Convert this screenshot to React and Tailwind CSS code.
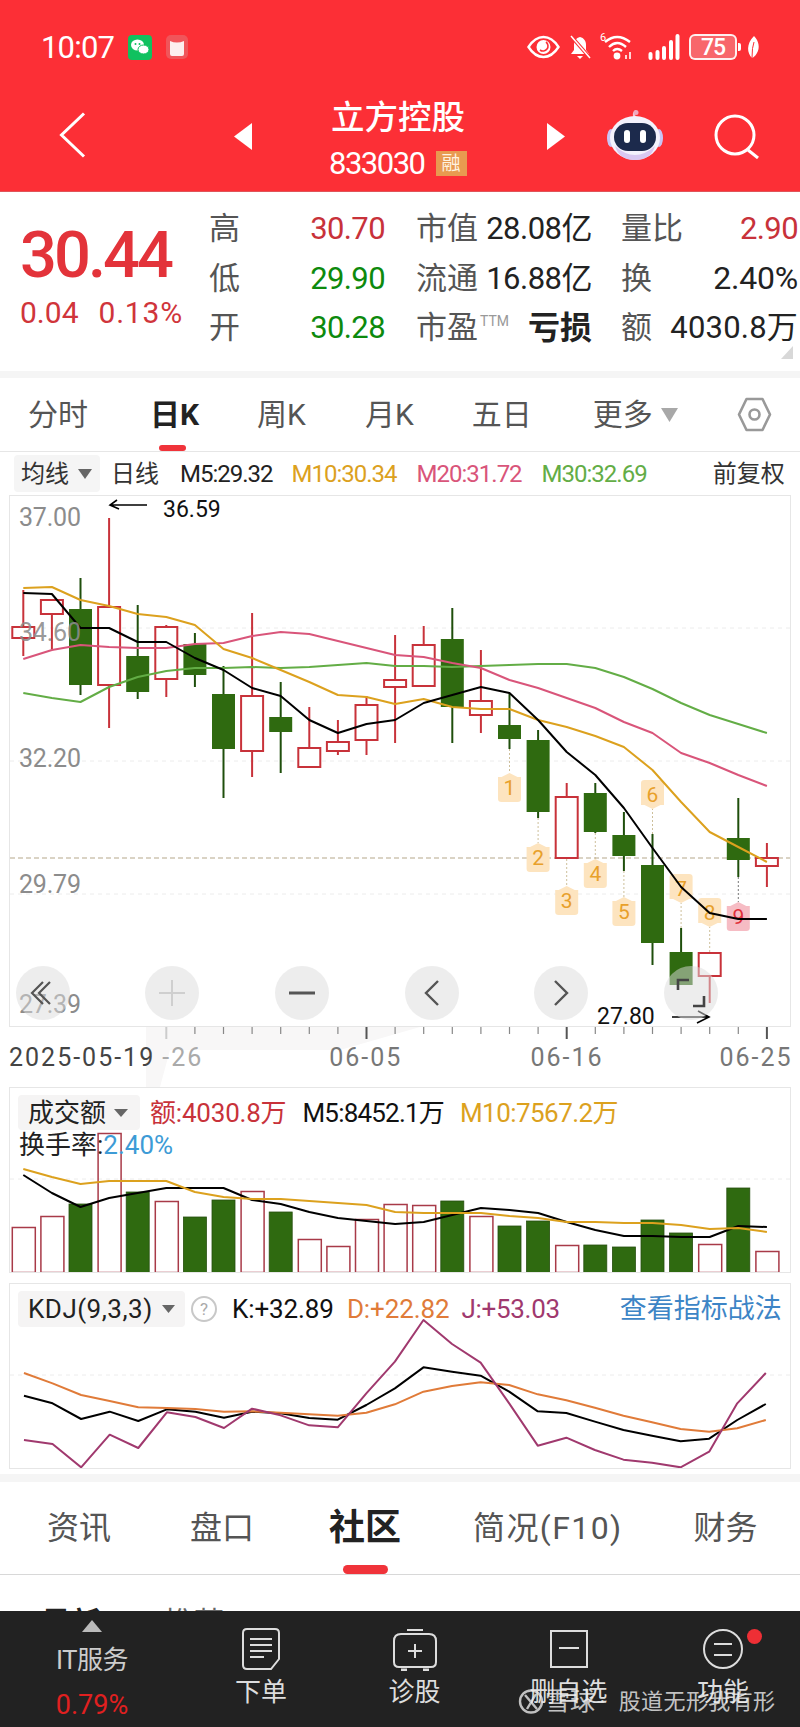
const RED = "#c8323a";
const GREEN = "#2f6a10";
const WICK_G = "#1f4f0c";

const xAt = (i) => 23.3 + 28.6 * i;
const pts = (ys) => ys.map((y, i) => `${xAt(i)},${y}`).join(" ");

// type, wickTop, bodyTop, bodyBottom, wickBottom
const candles = [
  ["r", 590, 626, 639, 656],
  ["r", 599, 599, 615, 649],
  ["g", 578, 609, 685, 695],
  ["r", 518, 606, 686, 728],
  ["g", 605, 656, 692, 699],
  ["r", 625, 626, 680, 697],
  ["g", 633, 644, 675, 687],
  ["g", 666, 694, 749, 798],
  ["r", 613, 695, 752, 777],
  ["g", 682, 717, 732, 773],
  ["r", 707, 747, 768, 768],
  ["r", 720, 741, 752, 755],
  ["r", 696, 704, 741, 755],
  ["r", 635, 679, 688, 743],
  ["r", 626, 644, 687, 687],
  ["g", 608, 639, 707, 743],
  ["r", 650, 700, 716, 733],
  ["g", 693, 725, 739, 749],
  ["g", 730, 740, 812, 818],
  ["r", 783, 796, 859, 859],
  ["g", 783, 793, 832, 833],
  ["g", 812, 835, 856, 871],
  ["g", 834, 865, 943, 965],
  ["g", 928, 952, 985, 985],
  ["r", 952, 952, 977, 1003],
  ["g", 798, 838, 860, 877],
  ["r", 843, 857, 867, 887],
];

const ma5 = [593, 594, 628, 628, 642, 642, 658, 670, 688, 696, 720, 733, 724, 720, 703, 695, 687, 693, 720, 752, 775, 808, 848, 887, 913, 919, 919];
const ma10 = [588, 587, 600, 606, 614, 617, 625, 649, 658, 670, 682, 695, 697, 704, 699, 707, 709, 709, 720, 727, 736, 747, 770, 802, 832, 847, 862];
const ma20 = [659, 650, 645, 647, 648, 648, 644, 643, 636, 632, 634, 641, 648, 655, 657, 663, 668, 680, 688, 698, 708, 722, 733, 753, 763, 775, 786];
const ma30 = [693, 698, 702, 687, 677, 671, 668, 668, 667, 668, 667, 665, 663, 666, 666, 667, 666, 665, 664, 664, 668, 677, 689, 703, 715, 724, 733];

const badges = [
  { n: 1, i: 17, top: 773, up: true, from: 749 },
  { n: 2, i: 18, top: 843, up: true, from: 818 },
  { n: 3, i: 19, top: 886, up: true, from: 859 },
  { n: 4, i: 20, top: 859, up: true, from: 833 },
  { n: 5, i: 21, top: 897, up: true, from: 871 },
  { n: 6, i: 22, top: 780, up: false, from: 834 },
  { n: 7, i: 23, top: 874, up: false, from: 928 },
  { n: 8, i: 24, top: 898, up: false, from: 952 },
  { n: 9, i: 25, top: 902, up: true, from: 877, pink: true },
];

const vols = [
  ["r", 1227], ["r", 1216], ["g", 1204], ["r", 1133], ["g", 1192], ["r", 1201], ["g", 1217], ["g", 1200], ["r", 1191],
  ["g", 1212], ["r", 1239], ["r", 1246], ["r", 1219], ["r", 1204], ["r", 1205], ["g", 1201], ["r", 1216], ["g", 1226],
  ["g", 1221], ["r", 1245], ["g", 1245], ["g", 1247], ["g", 1220], ["g", 1233], ["r", 1244], ["g", 1188], ["r", 1251],
];
const volM5 = [1175, 1193, 1207, 1198, 1193, 1188, 1188, 1188, 1200, 1204, 1212, 1218, 1221, 1224, 1222, 1215, 1208, 1210, 1213, 1222, 1230, 1236, 1236, 1237, 1237, 1226, 1227];
const volM10 = [1169, 1177, 1184, 1181, 1181, 1181, 1192, 1197, 1199, 1199, 1201, 1203, 1205, 1212, 1213, 1213, 1213, 1216, 1218, 1222, 1222, 1223, 1223, 1225, 1229, 1228, 1232];

// kdj read from the crop: x in 1.96 scale, y in 3x
const kdjX = [47, 103, 159, 215, 271, 327, 383, 439, 494, 550, 606, 662, 718, 774, 830, 886, 942, 998, 1054, 1110, 1166, 1222, 1278, 1334, 1390, 1445, 1501];
const kLine = [377, 400, 447, 425, 453, 418, 425, 443, 425, 430, 444, 449, 405, 355, 292, 305, 317, 365, 424, 429, 455, 480, 497, 514, 506, 450, 402];
const dLine = [309, 340, 375, 393, 412, 414, 417, 425, 424, 428, 433, 437, 428, 403, 365, 348, 337, 345, 373, 391, 413, 437, 457, 477, 485, 475, 450];
const jLine = [510, 522, 592, 494, 534, 427, 441, 474, 416, 436, 466, 472, 370, 275, 150, 222, 278, 400, 527, 503, 540, 569, 578, 592, 545, 400, 309];
const kdjPts = (ys) => ys.map((y, i) => `${kdjX[i] / 1.96},${1270 + y / 3}`).join(" ");

const Line = ({ points, color, w = 2 }) => (
  <polyline points={points} fill="none" stroke={color} strokeWidth={w} strokeLinejoin="round" />
);

const StatusIcons = () => (
  <>
    <svg className="ml-[11px] w-[24px] h-[25px]" viewBox="0 0 24 25">
      <rect width="24" height="25" rx="4" fill="#10c15f" />
      <ellipse cx="9.5" cy="10" rx="6.5" ry="5.5" fill="#fff" />
      <ellipse cx="15.5" cy="14.5" rx="5.5" ry="4.5" fill="#fff" stroke="#10c15f" />
      <circle cx="7.5" cy="9" r="1" fill="#10c15f" />
      <circle cx="11.5" cy="9" r="1" fill="#10c15f" />
    </svg>
    <svg className="ml-[14px] w-[22px] h-[24px]" viewBox="0 0 22 24">
      <rect width="22" height="24" rx="5" fill="#f0555a" />
      <path d="M4 6Q11 9 18 6V19Q18 21 16 21H6Q4 21 4 19Z" fill="#fdeeee" />
    </svg>
    <svg className="ml-[339px] w-[33px] h-[24px]" viewBox="0 0 33 24">
      <path d="M1.5 12C6 5 11 2 16.5 2S27 5 31.5 12C27 19 22 22 16.5 22S6 19 1.5 12Z" fill="none" stroke="#fff" strokeWidth="2.4" />
      <circle cx="16.5" cy="12" r="7" fill="#fff" />
      <path d="M13 15A5 5 0 0 0 19 7" fill="none" stroke="#fc2f36" strokeWidth="1.6" />
    </svg>
    <svg className="ml-[9px] w-[23px] h-[24px]" viewBox="0 0 23 24">
      <path d="M11 2C7 3 5 6 5 10V15L2 19H20L17 15V10C17 6 15 3 11 2Z" fill="#fff" />
      <path d="M8 21H14L11 24Z" fill="#fff" />
      <path d="M2 1L21 23" stroke="#fc2f36" strokeWidth="3.5" />
      <path d="M2 1L21 23" stroke="#fff" strokeWidth="1.5" />
    </svg>
    <div className="relative ml-[8px] w-[35px] h-[26px]">
      <span className="absolute left-0 -top-[2px] text-[11px] leading-none text-white">6</span>
      <svg className="absolute inset-0 w-[35px] h-[26px]" viewBox="0 0 35 26">
        <path d="M5 8Q17 -2 30 8" fill="none" stroke="#fff" strokeWidth="2.4" />
        <path d="M9 13Q17 5 26 13" fill="none" stroke="#fff" strokeWidth="2.4" />
        <path d="M13 17Q17 13 22 17" fill="none" stroke="#fff" strokeWidth="2.4" />
        <circle cx="17" cy="22" r="3.4" fill="#fff" />
        <path d="M26 25V21M30 25V18" stroke="#fff" strokeWidth="1.6" />
      </svg>
    </div>
    <svg className="ml-[13px] w-[32px] h-[26px]" viewBox="0 0 32 26" stroke="#fff" strokeWidth="4" strokeLinecap="round">
      <path d="M2.5 20V24M9.5 18V24M16 14V24M23 8V24M29.5 2V24" />
    </svg>
    <div className="ml-[9px] w-[48px] h-[26px] rounded-[6px] border-2 border-white/90 bg-[#f8666b] flex items-center justify-center text-[23px] leading-none text-white font-medium tracking-[-1px]">
      75
    </div>
    <div className="ml-[1px] w-[3px] h-[8px] bg-white rounded-r-[2px]" />
    <svg className="ml-[5px] w-[14px] h-[24px]" viewBox="0 0 14 24">
      <path d="M8 1C13 6 14 13 11 18C9 22 6 23 6 23C1 18 0 9 8 1Z" fill="#fff" />
      <path d="M6 23Q6 12 8 7" stroke="#fc2f36" fill="none" strokeWidth="1" />
    </svg>
  </>
);

const Robot = () => (
  <svg className="ml-[42px] mt-[16px] w-[56px] h-[50px]" viewBox="0 0 56 50">
    <path d="M28 10C27 5 26 3 29 1" fill="none" stroke="#f3c3d2" strokeWidth="2.4" />
    <circle cx="29" cy="2.5" r="2.5" fill="#f0a8bf" />
    <ellipse cx="4" cy="28" rx="4" ry="9" fill="#c9c4f4" />
    <ellipse cx="52" cy="28" rx="4" ry="9" fill="#c9c4f4" />
    <ellipse cx="28" cy="28" rx="25" ry="22" fill="#f4f2fd" />
    <path d="M8 36Q28 54 48 36Q44 50 28 50Q12 50 8 36Z" fill="#d9c8f2" />
    <rect x="7" y="13" width="42" height="28" rx="14" fill="#1c2a4c" />
    <rect x="17" y="20" width="6" height="13" rx="3" fill="#fff" />
    <rect x="33" y="20" width="6" height="13" rx="3" fill="#fff" />
  </svg>
);

const Cell = ({ label, children }) => (
  <div className="flex items-center justify-between h-[49.5px]">
    <span className="text-[31px] leading-none text-[#555]">{label}</span>
    {children}
  </div>
);

const Quote = () => (
  <div className="h-[179px] flex bg-white pt-[12px] relative">
    <div className="w-[209px] pl-[20px] shrink-0">
      <div className="mt-[19px] text-[65px] leading-none font-medium text-[#e3333a] tracking-[-3px]">30.44</div>
      <div className="mt-[10px] flex text-[30px] leading-none text-[#d0353b]">
        <span>0.04</span>
        <span className="ml-[20px] tracking-[0.8px]">0.13%</span>
      </div>
    </div>
    <div className="w-[176px] shrink-0">
      <Cell label="高"><span className="text-[31px] leading-none text-[#c8323a] tracking-[-0.6px]">30.70</span></Cell>
      <Cell label="低"><span className="text-[31px] leading-none text-[#0d8a0d] tracking-[-0.6px]">29.90</span></Cell>
      <Cell label="开"><span className="text-[31px] leading-none text-[#0d8a0d] tracking-[-0.6px]">30.28</span></Cell>
    </div>
    <div className="w-[176px] shrink-0 ml-[31px]">
      <Cell label="市值"><span className="text-[31px] leading-none text-[#222] tracking-[-0.5px]">28.08亿</span></Cell>
      <Cell label="流通"><span className="text-[31px] leading-none text-[#222] tracking-[-0.5px]">16.88亿</span></Cell>
      <div className="flex items-center h-[49.5px]">
        <span className="text-[31px] leading-none text-[#555]">市盈</span>
        <span className="ml-[2px] -mt-[14px] text-[14px] leading-none text-[#999]">TTM</span>
        <span className="ml-auto text-[32px] leading-none font-bold text-[#222]">亏损</span>
      </div>
    </div>
    <div className="w-[177px] shrink-0 ml-[29px]">
      <Cell label="量比"><span className="text-[31px] leading-none text-[#c8323a] tracking-[-0.6px]">2.90</span></Cell>
      <Cell label="换"><span className="text-[32px] leading-none text-[#222] tracking-[-0.2px]">2.40%</span></Cell>
      <Cell label="额"><span className="text-[31px] leading-none text-[#222] tracking-[0.2px]">4030.8万</span></Cell>
    </div>
    <svg className="absolute right-[7px] bottom-[12px] w-[12px] h-[13px]" viewBox="0 0 12 13">
      <path d="M12 0V13H0Z" fill="#d8d8d8" />
    </svg>
  </div>
);

const PeriodTabs = () => (
  <div className="relative h-[74px] bg-white border-b border-[#e6e6e6] flex items-center text-[#555]">
    <span className="ml-[28px] text-[30px] leading-none">分时</span>
    <span className="ml-[62px] text-[30px] leading-none font-bold text-[#222]">日K</span>
    <span className="ml-[58px] text-[30px] leading-none">周K</span>
    <span className="ml-[59px] text-[30px] leading-none">月K</span>
    <span className="ml-[58px] text-[30px] leading-none">五日</span>
    <span className="ml-[61px] text-[30px] leading-none">更多</span>
    <svg className="ml-[8px] w-[17px] h-[14px]" viewBox="0 0 17 14">
      <path d="M0 0H17L8.5 14Z" fill="#a8a8a8" />
    </svg>
    <svg className="ml-[59px] w-[35px] h-[35px]" viewBox="0 0 35 35" fill="none" stroke="#999" strokeWidth="2.6">
      <path d="M9.5 2H25.5L33 17.5L25.5 33H9.5L2 17.5Z" strokeLinejoin="round" />
      <circle cx="17.5" cy="17.5" r="5" />
    </svg>
    <div className="absolute left-[159px] bottom-0 w-[27px] h-[6px] rounded-full bg-[#f0333a]" />
  </div>
);

const MaRow = () => (
  <div className="h-[43px] bg-white flex items-center text-[24px] leading-none">
    <div className="ml-[14px] w-[86px] h-[37px] rounded-[4px] bg-[#f5f5f5] flex items-center">
      <span className="ml-[7px] text-[#333]">均线</span>
      <svg className="ml-[9px] w-[14px] h-[10px]" viewBox="0 0 14 10">
        <path d="M0 0H14L7 10Z" fill="#666" />
      </svg>
    </div>
    <span className="ml-[11px] text-[#333]">日线</span>
    <span className="ml-[21px] text-[#222] tracking-[-1px]">M5:29.32</span>
    <span className="ml-[19px] text-[#dca11e] tracking-[-1px]">M10:30.34</span>
    <span className="ml-[20px] text-[#d9557a] tracking-[-1px]">M20:31.72</span>
    <span className="ml-[20px] text-[#63ad46] tracking-[-1px]">M30:32.69</span>
    <span className="ml-[66px] text-[#333]">前复权</span>
  </div>
);

const Axis = ({ top, children, cls = "text-[#8c8c8c]" }) => (
  <span className={`absolute left-[9px] text-[25px] leading-none tracking-[-0.2px] ${cls}`} style={{ top: top - 496 - 12 }}>
    {children}
  </span>
);

const RoundBtn = ({ x, children }) => (
  <div
    className="absolute top-[470px] w-[54px] h-[54px] rounded-full bg-[#dcdcdc]/50 flex items-center justify-center"
    style={{ left: x - 27 - 10 }}
  >
    {children}
  </div>
);

const PriceChart = () => (
  <div className="relative mx-[9px] h-[532px] border border-[#e6e6e6] bg-white">
    <svg className="block w-full h-full" viewBox="10 496 780 530">
      <path d="M10 628H790M10 761H790M10 894H790" stroke="#ececec" strokeWidth="1" strokeDasharray="4 4" />
      <path d="M10 858H790" stroke="#b5a78a" strokeWidth="1" strokeDasharray="5 3" />
      {candles.map(([t, wt, bt, bb, wb], i) => {
        const x = xAt(i);
        return t === "r" ? (
          <g key={i}>
            <path d={`M${x} ${wt}V${wb}`} stroke={RED} strokeWidth="2" />
            <rect x={x - 11} y={bt + 1} width="22" height={bb - bt - 2} fill="#fff" stroke={RED} strokeWidth="2" />
          </g>
        ) : (
          <g key={i}>
            <path d={`M${x} ${wt}V${wb}`} stroke={WICK_G} strokeWidth="2" />
            <rect x={x - 11.5} y={bt} width="23" height={bb - bt} fill={GREEN} />
          </g>
        );
      })}
      {badges.map((b) => {
        const x = xAt(b.i);
        const h = 29;
        const end = b.up ? b.top : b.top + h;
        const shape = b.up
          ? `M${x} ${b.top}L${x + 8} ${b.top + 4}H${x + 11.5}V${b.top + h - 3}Q${x + 11.5} ${b.top + h} ${x + 8} ${b.top + h}H${x - 8}Q${x - 11.5} ${b.top + h} ${x - 11.5} ${b.top + h - 3}V${b.top + 4}H${x - 8}Z`
          : `M${x} ${b.top + h}L${x + 8} ${b.top + h - 4}H${x + 11.5}V${b.top + 3}Q${x + 11.5} ${b.top} ${x + 8} ${b.top}H${x - 8}Q${x - 11.5} ${b.top} ${x - 11.5} ${b.top + 3}V${b.top + h - 4}H${x - 8}Z`;
        return (
          <g key={b.n}>
            <path d={`M${x} ${b.from}V${end}`} stroke={b.pink ? "#777" : "#cdbf9a"} strokeWidth="1" strokeDasharray="2 2" />
            <path d={shape} fill={b.pink ? "#f6bcc4" : "#fde4bf"} />
            <text x={x} y={b.top + 22} textAnchor="middle" fontSize="21" fill={b.pink ? "#e0303a" : "#e8a02a"}>
              {b.n}
            </text>
          </g>
        );
      })}
      <Line points={pts(ma30)} color="#63ad46" />
      <Line points={pts(ma20)} color="#d9557a" />
      <Line points={pts(ma10)} color="#dca11e" />
      <Line points={pts(ma5)} color="#000" />
      <path d="M147 505H110M117 500L110 505L119 509" fill="none" stroke="#000" strokeWidth="1.6" />
      <path d="M672 1017H709M698 1011L709 1017L697 1023" fill="none" stroke="#000" strokeWidth="1.6" />
    </svg>
    <Axis top={517}>37.00</Axis>
    <Axis top={632} cls="text-[#8c8c8c]/90">34.60</Axis>
    <Axis top={758}>32.20</Axis>
    <Axis top={884}>29.79</Axis>
    <Axis top={1004}>27.39</Axis>
    <span className="absolute left-[153px] top-[2px] text-[23px] leading-none text-[#111]">36.59</span>
    <span className="absolute left-[587px] top-[509px] text-[23px] leading-none text-[#111]">27.80</span>
    <RoundBtn x={43}>
      <svg className="w-[28px] h-[28px]" viewBox="0 0 28 28" fill="none" stroke="#555" strokeWidth="2.2">
        <path d="M14 3L3 14L14 25M21 3L10 14L21 25" />
      </svg>
    </RoundBtn>
    <RoundBtn x={172}>
      <svg className="w-[26px] h-[26px]" viewBox="0 0 26 26" stroke="#cfcfcf" strokeWidth="2">
        <path d="M0 13H26M13 0V26" />
      </svg>
    </RoundBtn>
    <RoundBtn x={302}>
      <svg className="w-[26px] h-[4px]" viewBox="0 0 26 4">
        <path d="M0 2H26" stroke="#555" strokeWidth="3" />
      </svg>
    </RoundBtn>
    <RoundBtn x={432}>
      <svg className="w-[16px] h-[28px]" viewBox="0 0 16 28" fill="none" stroke="#555" strokeWidth="2.4">
        <path d="M14 2L2 14L14 26" />
      </svg>
    </RoundBtn>
    <RoundBtn x={561}>
      <svg className="w-[16px] h-[28px]" viewBox="0 0 16 28" fill="none" stroke="#555" strokeWidth="2.4">
        <path d="M2 2L14 14L2 26" />
      </svg>
    </RoundBtn>
    <RoundBtn x={691}>
      <svg className="w-[30px] h-[30px]" viewBox="0 0 30 30" fill="none" stroke="#444" strokeWidth="2.6">
        <path d="M13 2H2V12M17 28H28V18" />
      </svg>
    </RoundBtn>
  </div>
);

const DateAxis = () => (
  <div className="relative h-[60px] bg-white flex items-end pb-[17px] text-[25px] leading-none tracking-[2px]">
    <svg className="absolute inset-0 w-full h-full" viewBox="0 1027 800 60">
      <path d="M146 1027H420L340 1050H170L160 1087H146Z" fill="#f8f7f7" />
      {candles.map((_, i) => {
        if (i < 5) return null;
        const major = i === 5 || i === 12 || i === 19 || i === 26;
        const x = xAt(i);
        return (
          <path
            key={i}
            d={`M${x} 1027V${major ? 1039 : 1034}`}
            stroke={i === 5 ? "#ccc" : major ? "#555" : "#888"}
            strokeWidth={major ? 2 : 1.2}
          />
        );
      })}
    </svg>
    <span className="relative ml-[9px] text-[#444]">2025-05-19</span>
    <span className="relative ml-[7px] text-[#aaa]">-26</span>
    <span className="relative ml-[126px] text-[#777]">06-05</span>
    <span className="relative ml-[128px] text-[#777]">06-16</span>
    <span className="relative ml-[116px] text-[#777]">06-25</span>
  </div>
);

const VolumeChart = () => (
  <div className="relative mx-[9px] h-[186px] border border-[#e6e6e6] bg-white">
    <svg className="block w-full h-full" viewBox="10 1088 780 184">
      <path d="M10 1179H790" stroke="#ececec" strokeWidth="1" strokeDasharray="4 4" />
      {vols.map(([t, top], i) => {
        const x = xAt(i);
        return t === "r" ? (
          <rect key={i} x={x - 11} y={top + 0.5} width="23" height={1272 - top} fill="none" stroke="#a83a48" strokeWidth="1.5" />
        ) : (
          <rect key={i} x={x - 11.5} y={top} width="23" height={1273 - top} fill={GREEN} stroke="#274f10" strokeWidth="0.8" />
        );
      })}
      <Line points={pts(volM5)} color="#000" />
      <Line points={pts(volM10)} color="#dca11e" />
    </svg>
    <div className="absolute left-[8px] top-[7px] flex items-center text-[26px] leading-none">
      <div className="w-[122px] h-[35px] rounded-[4px] bg-[#f5f4f4] flex items-center pl-[10px]">
        <span className="text-[#222] text-[26px]">成交额</span>
        <svg className="ml-[8px] w-[14px] h-[8px]" viewBox="0 0 14 8">
          <path d="M0 0H14L7 8Z" fill="#666" />
        </svg>
      </div>
      <span className="ml-[10px] text-[#c8323a] tracking-[-0.2px]">额:4030.8万</span>
      <span className="ml-[16px] text-[#111] tracking-[-0.8px]">M5:8452.1万</span>
      <span className="ml-[16px] text-[#dca11e] tracking-[-0.55px]">M10:7567.2万</span>
    </div>
    <div className="absolute left-[9px] top-[44px] text-[26px] leading-none text-[#222]">
      换手率:<span className="text-[#3d9bd6]">2.40%</span>
    </div>
  </div>
);

const KdjChart = () => (
  <div className="relative mx-[9px] mt-[10px] h-[186px] border border-[#e6e6e6] bg-white">
    <svg className="block w-full h-full" viewBox="10 1284 780 184">
      <path d="M10 1375H790" stroke="#ececec" strokeWidth="1" strokeDasharray="4 4" />
      <Line points={kdjPts(kLine)} color="#000" />
      <Line points={kdjPts(dLine)} color="#e07b39" />
      <Line points={kdjPts(jLine)} color="#a0396e" />
    </svg>
    <div className="absolute left-[8px] top-[7px] flex items-center text-[26px] leading-none">
      <div className="w-[167px] h-[36px] rounded-[4px] bg-[#f5f4f4] flex items-center pl-[10px]">
        <span className="text-[#222] tracking-[0.5px]">KDJ(9,3,3)</span>
        <svg className="ml-[9px] w-[13px] h-[8px]" viewBox="0 0 13 8">
          <path d="M0 0H13L6.5 8Z" fill="#666" />
        </svg>
      </div>
      <div className="ml-[6px] w-[26px] h-[26px] rounded-full border-2 border-[#c8c8c8] flex items-center justify-center text-[17px] text-[#aaa]">?</div>
      <span className="ml-[15px] text-[#111] tracking-[-0.1px]">K:+32.89</span>
      <span className="ml-[13px] text-[#e07b39] tracking-[-0.1px]">D:+22.82</span>
      <span className="ml-[12px] text-[#a0396e] tracking-[-0.3px]">J:+53.03</span>
      <span className="ml-[60px] text-[27px] text-[#3d85c6]">查看指标战法</span>
    </div>
  </div>
);

const BottomTabs = () => (
  <div className="relative h-[93px] bg-white border-b border-[#d8d8d8] flex items-center text-[32px] leading-none text-[#555]">
    <span className="ml-[47px]">资讯</span>
    <span className="ml-[79px]">盘口</span>
    <span className="ml-[75px] text-[36px] font-bold text-[#222]">社区</span>
    <span className="ml-[72px] tracking-[1.4px]">简况(F10)</span>
    <span className="ml-[71px]">财务</span>
    <div className="absolute left-[343px] bottom-0 w-[45px] h-[9px] rounded-full bg-[#f0333a]" />
  </div>
);

const FootItem = ({ icon, label }) => (
  <div className="flex flex-col items-center">
    <div className="h-[62px] flex items-end">{icon}</div>
    <span className="mt-[6px] text-[26px] leading-none text-[#ddd]">{label}</span>
  </div>
);

const Footer = () => (
  <div className="relative h-[116px] bg-[#222] grid grid-cols-[184px_154px_153px_155px_154px]">
    <div className="flex flex-col items-center">
      <svg className="mt-[9px] w-[20px] h-[12px]" viewBox="0 0 20 12">
        <path d="M10 0L20 12H0Z" fill="#bbb" />
      </svg>
      <span className="mt-[15px] text-[26px] leading-none text-[#ccc] tracking-[-0.5px]">IT服务</span>
      <span className="mt-[19px] text-[27px] leading-none text-[#e02020]">0.79%</span>
    </div>
    <FootItem
      label="下单"
      icon={
        <svg className="w-[38px] h-[42px] mb-[3px]" viewBox="0 0 38 42" fill="none" stroke="#ddd" strokeWidth="2">
          <path d="M5 1H33Q37 1 37 5V31L29 41H5Q1 41 1 37V5Q1 1 5 1Z" />
          <path d="M8 11H30M8 17H30M8 23H30M8 29H22" />
        </svg>
      }
    />
    <FootItem
      label="诊股"
      icon={
        <svg className="w-[44px] h-[42px] mb-[2px]" viewBox="0 0 44 42" fill="none" stroke="#ddd" strokeWidth="2">
          <path d="M14 1H30M8 5H36Q43 5 43 12V33Q43 38 38 38H6Q1 38 1 33V12Q1 5 8 5Z" />
          <path d="M8 41H14M30 41H36" strokeWidth="3" />
          <path d="M15 22H29M22 15V29" />
        </svg>
      }
    />
    <FootItem
      label="删自选"
      icon={
        <svg className="w-[38px] h-[38px] mb-[5px]" viewBox="0 0 38 38" fill="none" stroke="#ddd" strokeWidth="2">
          <rect x="1" y="1" width="36" height="36" />
          <path d="M9 18H29" />
        </svg>
      }
    />
    <FootItem
      label="功能"
      icon={
        <svg className="w-[40px] h-[40px] mb-[4px]" viewBox="0 0 40 40" fill="none" stroke="#ddd" strokeWidth="2">
          <circle cx="20" cy="20" r="19" />
          <path d="M11 15H29M11 26H29" />
        </svg>
      }
    />
    <div className="absolute left-[747px] top-[18px] w-[15px] h-[15px] rounded-full bg-[#ee2f35]" />
    <div className="absolute left-[518px] top-[77px] flex items-center text-[#f0f0f0]/80 leading-none">
      <svg className="w-[26px] h-[27px]" viewBox="0 0 26 27" fill="none" stroke="#e8e8e8" strokeOpacity="0.8" strokeWidth="2.4">
        <circle cx="13" cy="13.5" r="11" />
        <path d="M7 7L19 21M18 6L9 21" />
      </svg>
      <span className="ml-[1px] text-[25px]">雪球</span>
      <span className="ml-[5px] text-[18px]">·</span>
      <span className="ml-[14px] text-[22px] tracking-[0.4px]">股道无形我有形</span>
    </div>
  </div>
);

export default function App() {
  return (
    <div className="w-[800px] h-[1727px] overflow-hidden bg-white font-[Roboto,'Noto_Sans_CJK_SC',sans-serif]">
      <div className="h-[191px] bg-[#fc2f36] text-white border-b border-[#e0555a] box-content">
        <div className="h-[94px] flex items-center">
          <span className="ml-[41px] w-[76px] text-[31px] leading-none tracking-[-0.8px]">10:07</span>
          <StatusIcons />
        </div>
        <div className="h-[97px] flex items-start">
          <svg className="ml-[59px] mt-[18px] w-[27px] h-[46px]" viewBox="0 0 27 46" fill="none" stroke="#fff" strokeWidth="3">
            <path d="M25 1.5L2.5 23L25 44.5" />
          </svg>
          <svg className="ml-[148px] mt-[29px] w-[18px] h-[27px]" viewBox="0 0 18 27">
            <path d="M18 0V27L0 13.5Z" fill="#fff" />
          </svg>
          <div className="ml-[77px] w-[140px] mt-[7px]">
            <div className="pl-[2px] text-[33.5px] leading-none whitespace-nowrap font-medium">立方控股</div>
            <div className="mt-[13px] flex items-center">
              <span className="text-[31px] leading-none tracking-[-1.5px]">833030</span>
              <span className="ml-[11px] w-[31px] h-[25px] bg-[#e89a50] text-[#fff3e0] text-[19px] leading-none flex items-center justify-center">融</span>
            </div>
          </div>
          <svg className="ml-[78px] mt-[29px] w-[18px] h-[27px]" viewBox="0 0 18 27">
            <path d="M0 0V27L18 13.5Z" fill="#fff" />
          </svg>
          <Robot />
          <svg className="ml-[51px] mt-[19px] w-[46px] h-[46px]" viewBox="0 0 46 46" fill="none" stroke="#fff" strokeWidth="3">
            <circle cx="21" cy="22" r="19" />
            <path d="M34 37L44 45" />
          </svg>
        </div>
      </div>
      <Quote />
      <div className="h-[7px] bg-[#f5f5f5]" />
      <PeriodTabs />
      <MaRow />
      <PriceChart />
      <DateAxis />
      <VolumeChart />
      <KdjChart />
      <div className="h-[5px] bg-white" />
      <div className="h-[8px] bg-[#f5f5f5]" />
      <BottomTabs />
      <div className="h-[36px] overflow-hidden bg-white flex pt-[33px] text-[30px] leading-none">
        <span className="ml-[41px] font-bold text-[#222]">最新</span>
        <span className="ml-[63px] text-[#666]">推荐</span>
      </div>
      <Footer />
    </div>
  );
}
